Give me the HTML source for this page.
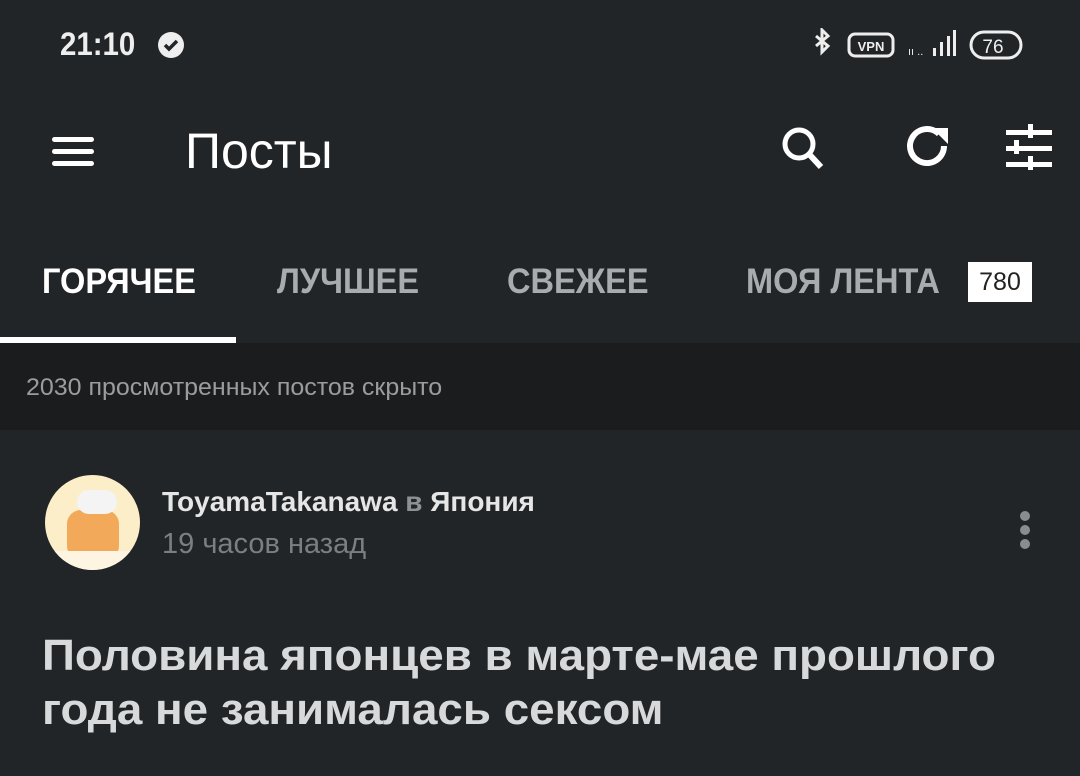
<!DOCTYPE html><html><head><meta charset="utf-8"><style>
body{margin:0;width:1080px;height:776px;background:#212528;font-family:"Liberation Sans","DejaVu Sans",sans-serif;position:relative;overflow:hidden;color:#fff}
.a{position:absolute}
.tab{position:absolute;top:262px;font-size:35px;font-weight:bold;transform:scaleX(.93);transform-origin:left}
</style></head><body>
<div class="a" style="left:60px;top:26px;font-size:32px;font-weight:bold;color:#eee;transform:scaleX(.92);transform-origin:left">21:10</div>
<div class="a" style="left:158px;top:32px;width:26px;height:26px;border-radius:50%;background:#eee"><svg width="26" height="26"><path d="M7 13l4 4 8-8" stroke="#212528" stroke-width="3.5" fill="none"/></svg></div>
<svg class="a" style="left:808px;top:28px" width="220" height="36"><path d="M8 8l12 10-6 6V2l6 6-12 10" stroke="#eee" stroke-width="3" fill="none"/><rect x="41" y="6" width="44" height="22" rx="6" stroke="#eee" stroke-width="3" fill="none"/><text x="63" y="23" font-size="13" font-weight="bold" fill="#eee" text-anchor="middle" font-family="Liberation Sans">VPN</text><rect x="125" y="20" width="3" height="8" fill="#eee"/><rect x="132" y="14" width="3" height="14" fill="#eee"/><rect x="139" y="8" width="3" height="20" fill="#eee"/><rect x="145" y="2" width="3" height="26" fill="#eee"/><text x="100" y="27" font-size="11" fill="#eee">ıı ..</text><rect x="163" y="4" width="50" height="26" rx="13" stroke="#eee" stroke-width="3" fill="none"/><text x="185" y="25" font-size="19" fill="#eee" text-anchor="middle" font-family="Liberation Sans">76</text></svg>
<div class="a" style="left:52px;top:137px;width:42px;height:5px;background:#fff;border-radius:3px;box-shadow:0 12px 0 #fff,0 24px 0 #fff"></div>
<div class="a" style="left:185px;top:122px;font-size:50px">Посты</div>
<svg class="a" style="left:776px;top:122px" width="280" height="50"><circle cx="23" cy="22" r="14" stroke="#fff" stroke-width="5" fill="none"/><path d="M33 32l12 13" stroke="#fff" stroke-width="6"/><path d="M163 12a17 17 0 1 0 5 12" stroke="#fff" stroke-width="6" fill="none"/><path d="M156 6h16v16z" fill="#fff"/><g fill="#fff"><rect x="230" y="8" width="46" height="5"/><rect x="230" y="24" width="46" height="5"/><rect x="230" y="40" width="46" height="5"/><rect x="252" y="2" width="5" height="14" /><rect x="238" y="18" width="5" height="14"/><rect x="252" y="34" width="5" height="14"/></g></svg>
<div class="tab" style="left:42px;color:#fff">ГОРЯЧЕЕ</div>
<div class="tab" style="left:277px;color:#a9acaf">ЛУЧШЕЕ</div>
<div class="tab" style="left:507px;color:#a9acaf">СВЕЖЕЕ</div>
<div class="tab" style="left:746px;color:#a9acaf">МОЯ ЛЕНТА</div>
<div class="a" style="left:968px;top:262px;width:64px;height:40px;background:#fff;color:#222;font-size:25px;text-align:center;line-height:40px">780</div>
<div class="a" style="left:0;top:337px;width:236px;height:6px;background:#fff"></div>
<div class="a" style="left:0;top:343px;width:1080px;height:87px;background:#1b1c1e"></div>
<div class="a" style="left:26px;top:374px;font-size:24px;color:#9a9da0;transform:scaleX(1.04);transform-origin:left">2030 просмотренных постов скрыто</div>
<div class="a" style="left:45px;top:475px;width:95px;height:95px;border-radius:50%;background:#fbeec8;overflow:hidden"><div class="a" style="left:22px;top:35px;width:52px;height:50px;border-radius:14px;background:#f2aa5a"></div><div class="a" style="left:32px;top:15px;width:40px;height:24px;border-radius:12px;background:#f4f4f4"></div><div class="a" style="left:0;top:76px;width:95px;height:20px;background:#fdf5e2"></div></div>
<div class="a" style="left:162px;top:486px;font-size:28px;font-weight:bold;color:#e6e6e6">ToyamaTakanawa <span style="color:#8e9194">в</span> Япония</div>
<div class="a" style="left:162px;top:528px;font-size:29px;color:#7c7f82">19 часов назад</div>
<div class="a" style="left:1020px;top:511px;width:10px;height:10px;border-radius:50%;background:#8a8d90;box-shadow:0 14px 0 #8a8d90,0 28px 0 #8a8d90"></div>
<div class="a" style="left:42px;top:629px;font-size:44px;font-weight:bold;color:#d8d9da;line-height:54px;transform:scaleX(1.04);transform-origin:left;white-space:nowrap">Половина японцев в марте-мае прошлого<br>года не занималась сексом</div>
</body></html>
